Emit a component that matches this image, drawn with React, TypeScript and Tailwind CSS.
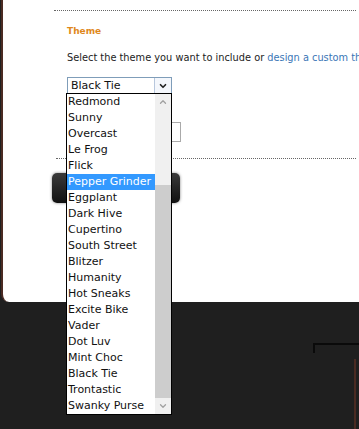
import { ChevronDown, ChevronUp } from 'lucide-react';

const themes = [
  'Redmond',
  'Sunny',
  'Overcast',
  'Le Frog',
  'Flick',
  'Pepper Grinder',
  'Eggplant',
  'Dark Hive',
  'Cupertino',
  'South Street',
  'Blitzer',
  'Humanity',
  'Hot Sneaks',
  'Excite Bike',
  'Vader',
  'Dot Luv',
  'Mint Choc',
  'Black Tie',
  'Trontastic',
  'Swanky Purse',
];

function ThemeList() {
  return (
    <div className="absolute left-[66px] top-[93px] w-[106px] h-[322px] bg-white border border-black flex">
      <ul className="flex-1 flex flex-col">
        {themes.map((t) => (
          <li
            key={t}
            className={
              t === 'Pepper Grinder'
                ? 'h-[16px] leading-[16px] pl-[1px] text-[11px] bg-[#3399ff] text-white whitespace-nowrap'
                : 'h-[16px] leading-[16px] pl-[1px] text-[11px] text-[#111] whitespace-nowrap'
            }
          >
            {t}
          </li>
        ))}
      </ul>
      {/* scrollbar */}
      <div className="w-[16px] flex flex-col bg-[#f0f0f0]">
        <div className="h-[16px] flex items-center justify-center">
          <ChevronUp size={10} strokeWidth={3} className="text-[#a0a0a0]" />
        </div>
        <div className="h-[75px]" />
        <div className="flex-1 bg-[#cdcdcd]" />
        <div className="h-[16px] flex items-center justify-center">
          <ChevronDown size={10} strokeWidth={3} className="text-[#a0a0a0]" />
        </div>
      </div>
    </div>
  );
}

export default function App() {
  return (
    <div className="relative w-[359px] h-[429px] overflow-hidden bg-[#1f1f1f] font-['DejaVu_Sans',sans-serif]">
      <div className="h-[302px] bg-white ml-[1px] border-l-2 border-[#4a2a22] rounded-bl-[8px] pt-[10px] pr-[3px]">
        <div className="ml-[51px] border-t border-dotted border-[#666]" />
        <div className="pl-[64px]">
          <h3 className="mt-[14px] text-[9px] font-bold text-[#e0881c] leading-[12px]">Theme</h3>
          <p className="mt-[15px] text-[9.8px] text-[#222] leading-[12px] whitespace-nowrap">
            Select the theme you want to include or{' '}
            <a className="text-[#3a76b6]">design a custom theme</a>
          </p>
          <div className="mt-[13px] w-[105px] h-[17px] border border-[#7f9db9] flex items-center bg-white">
            <span className="flex-1 pl-[3px] text-[11px] text-[#111] leading-[15px]">Black Tie</span>
            <div className="w-[17px] h-full border-l border-[#b7c7dd] bg-[#f4f7fc] flex items-center justify-center">
              <ChevronDown size={10} strokeWidth={4} className="text-[#222]" />
            </div>
          </div>
          <div className="mt-[28px] ml-[40px] w-[74px] h-[20px] border border-[#aaa]" />
        </div>
        <div className="mt-[16px] ml-[53px] border-t border-dotted border-[#666]" />
        <div className="mt-[14px] ml-[49px] w-[128px] h-[30px] rounded-[5px] bg-gradient-to-b from-[#3a3a3a] to-[#111] shadow-[0_0_3px_rgba(0,0,0,0.5)]" />
      </div>
      <div className="ml-[313px] mt-[41px] h-[10px] border-t-2 border-l-2 border-[#0a0a0a]" />
      <div className="ml-[354px] mt-[6px] w-[2px] h-[80px] bg-[#4a2a22]" />
      <ThemeList />
    </div>
  );
}
